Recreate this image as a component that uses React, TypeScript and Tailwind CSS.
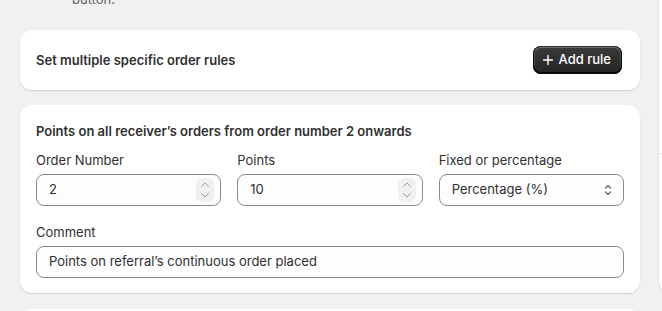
import React from 'react';

function Spinner() {
  return (
    <div className="flex h-[24px] w-[18px] flex-col items-center justify-between rounded-md bg-[#f0f0f0] py-[3px]">
      <svg width="10" height="7" viewBox="0 0 10 7" fill="none">
        <path d="M1.5 5.5L5 2L8.5 5.5" stroke="#9a9a9a" strokeWidth="1" strokeLinecap="round" strokeLinejoin="round" />
      </svg>
      <svg width="10" height="7" viewBox="0 0 10 7" fill="none">
        <path d="M1.5 1.5L5 5L8.5 1.5" stroke="#9a9a9a" strokeWidth="1" strokeLinecap="round" strokeLinejoin="round" />
      </svg>
    </div>
  );
}

function SelectArrows() {
  return (
    <svg width="10" height="14" viewBox="0 0 10 14" fill="none">
      <path d="M2.5 5L5 2.5L7.5 5" stroke="#616161" strokeWidth="1.2" strokeLinecap="round" strokeLinejoin="round" />
      <path d="M2.5 9L5 11.5L7.5 9" stroke="#616161" strokeWidth="1.2" strokeLinecap="round" strokeLinejoin="round" />
    </svg>
  );
}

function Field({ label, children }: { label: string; children: React.ReactNode }) {
  return (
    <div className="flex flex-col gap-1">
      <label className="text-[13px] leading-5 text-[#303030]">{label}</label>
      {children}
    </div>
  );
}

function NumberInput({ value }: { value: string }) {
  return (
    <div className="flex h-8 items-center justify-between rounded-lg border border-[#8a8a8a] bg-[#fdfdfd] pl-3 pr-[6px]">
      <span className="text-[13px] text-[#303030]">{value}</span>
      <Spinner />
    </div>
  );
}

export default function App() {
  return (
    <div className="h-[311px] w-[662px] overflow-hidden bg-[#f1f1f1] font-['Inter',sans-serif] text-[#303030]">
      <div className="flex gap-[19px] pl-5">
        <div className="-mt-[11px] flex w-[620px] shrink-0 flex-col">
          <p className="pl-[52px] text-[13px] leading-5 text-[#616161]">button.</p>

          {/* Specific order rules */}
          <div className="mt-[21px] flex h-[60px] items-center justify-between rounded-xl bg-white pl-4 pr-[18px] shadow-[0_1px_0_0_rgba(26,26,26,0.07),0_1px_2px_rgba(0,0,0,0.08)]">
            <h3 className="text-[13px] font-semibold leading-5">Set multiple specific order rules</h3>
            <button className="flex h-7 items-center gap-[5px] rounded-lg bg-gradient-to-b from-[#3a3a3a] to-[#252525] pl-[9px] pr-[11px] text-[13px] font-medium text-white shadow-[0_-1px_0_1px_rgba(0,0,0,0.8)_inset,0_0_0_1px_#303030_inset,0_0.5px_0_1.5px_rgba(255,255,255,0.25)_inset]">
              <svg width="12" height="12" viewBox="0 0 12 12" fill="none">
                <path d="M6 1.5V10.5M1.5 6H10.5" stroke="white" strokeWidth="1.4" strokeLinecap="round" />
              </svg>
              Add rule
            </button>
          </div>

          {/* Rule card */}
          <div className="mt-[15px] rounded-xl bg-white px-4 pb-[15px] pt-4 shadow-[0_1px_0_0_rgba(26,26,26,0.07),0_1px_2px_rgba(0,0,0,0.08)]">
            <h3 className="mb-[9px] text-[13px] font-semibold leading-5">
              Points on all receiver’s orders from order number 2 onwards
            </h3>
            <div className="grid grid-cols-3 gap-4">
              <Field label="Order Number">
                <NumberInput value="2" />
              </Field>
              <Field label="Points">
                <NumberInput value="10" />
              </Field>
              <Field label="Fixed or percentage">
                <div className="flex h-8 items-center justify-between rounded-lg border border-[#8a8a8a] bg-[#fdfdfd] pl-3 pr-[10px]">
                  <span className="text-[13px]">Percentage (%)</span>
                  <SelectArrows />
                </div>
              </Field>
            </div>
            <div className="mt-4">
              <Field label="Comment">
                <div className="flex h-8 items-center rounded-lg border border-[#8a8a8a] bg-[#fdfdfd] px-3">
                  <span className="text-[13px]">Points on referral’s continuous order placed</span>
                </div>
              </Field>
            </div>
          </div>

          <div className="mt-4 h-10 rounded-xl bg-white shadow-[0_1px_0_0_rgba(26,26,26,0.07),0_1px_2px_rgba(0,0,0,0.08)]" />
        </div>

        {/* Right column, cut off */}
        <div className="-mt-[11px] flex w-[40px] shrink-0 flex-col">
          <div className="h-[304px] rounded-xl bg-white shadow-[0_0_0_1px_rgba(0,0,0,0.06)]">
            <div className="mt-[164px] border-t border-[#ebebeb]" />
          </div>
          <div className="mt-4 h-10 rounded-xl bg-white shadow-[0_0_0_1px_rgba(0,0,0,0.06)]" />
        </div>
      </div>
    </div>
  );
}
